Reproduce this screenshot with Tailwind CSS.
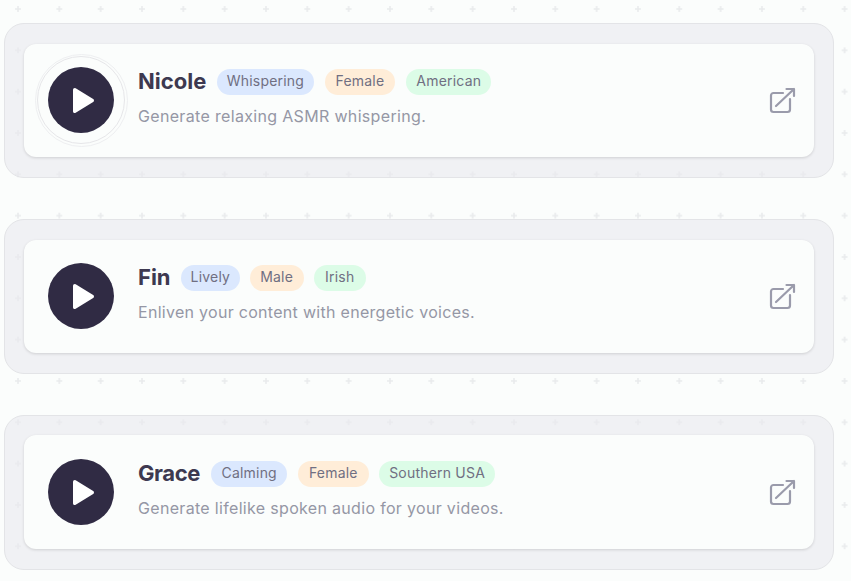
<!DOCTYPE html>
<html lang="en">
<head>
<meta charset="utf-8">
<script src="https://cdn.jsdelivr.net/npm/@tailwindcss/browser@4"></script>
</head>
<body class="relative h-[581px] w-[851px] overflow-hidden bg-[#fbfdfc] font-['Inter',sans-serif]">
<svg class="absolute inset-0" width="851" height="581" aria-hidden="true">
  <defs>
    <pattern id="p" x="-2.67" y="-11.67" width="41.33" height="41.33" patternUnits="userSpaceOnUse">
      <path d="M17.67 20.67h6M20.67 17.67v6" stroke="#e9ebed" stroke-width="1.6" fill="none"/>
    </pattern>
  </defs>
  <rect width="851" height="581" fill="url(#p)"/>
</svg>
<main class="relative flex flex-col gap-[41px] pt-[23px] pl-[4px]">

  <section class="h-[155px] w-[830px] rounded-[20px] border border-[#e3e4e7] bg-[#e9eaee]/60 pt-[20px] pl-[19px]">
    <div class="flex h-[113px] w-[790px] items-center rounded-[12px] bg-[#fbfdfc] pl-[24px] pr-[18px] shadow-[0_1px_3px_rgba(0,0,0,0.14)]">
      <div class="relative mb-px flex h-[66px] w-[66px] shrink-0 items-center justify-center rounded-full bg-[#302b44]">
        <span class="absolute -inset-[11px] rounded-full border border-[#e6e6e9]"></span>
        <span class="absolute -inset-[13.500px] rounded-full border border-[#eeeff1]"></span>
        <svg width="28" height="28" viewBox="0 0 28 28"><path d="M7.750 3.750 25.250 14.500 7.750 25.250z" fill="#fff" stroke="#fff" stroke-width="3.500" stroke-linejoin="round"/></svg>
      </div>
      <div class="-mt-[5px] ml-[24px] min-w-0 flex-1">
        <div class="flex items-center">
          <h2 class="mb-[2px] text-[22px] leading-[26px] font-bold text-[#3d3950]">Nicole</h2>
          <span class="ml-[11px] rounded-full bg-[#dbe8fe] px-[9.500px] pb-[2px] text-[14px] leading-[24px] tracking-[0.2px] text-[#706f82]">Whispering</span>
          <span class="ml-[11px] rounded-full bg-[#ffedd8] px-[11px] pb-[2px] text-[14px] leading-[24px] tracking-[0.2px] text-[#706f82]">Female</span>
          <span class="ml-[11px] rounded-full bg-[#dcfce7] px-[10px] pb-[2px] text-[14px] leading-[24px] tracking-[0.2px] text-[#706f82]">American</span>
        </div>
        <p class="mt-[8px] text-[16px] leading-[24px] tracking-[0.33px] text-[#9597a5]">Generate relaxing ASMR whispering.</p>
      </div>
      <svg class="mt-px" width="28" height="28" viewBox="0 0 28 28" fill="none" stroke="#9a9bab" stroke-width="2.2" stroke-linecap="round" stroke-linejoin="round"><path d="M15 6H5.500A2.500 2.500 0 0 0 3 8.500V22.500A2.500 2.500 0 0 0 5.500 25H19.500A2.500 2.500 0 0 0 22 22.500V12"/><path d="M8 19 26 2M18.500 2H26V9"/></svg>
    </div>
  </section>

  <section class="h-[155px] w-[830px] rounded-[20px] border border-[#e3e4e7] bg-[#e9eaee]/60 pt-[20px] pl-[19px]">
    <div class="flex h-[113px] w-[790px] items-center rounded-[12px] bg-[#fbfdfc] pl-[24px] pr-[18px] shadow-[0_1px_3px_rgba(0,0,0,0.14)]">
      <div class="relative mb-px flex h-[66px] w-[66px] shrink-0 items-center justify-center rounded-full bg-[#302b44]">
        <svg width="28" height="28" viewBox="0 0 28 28"><path d="M7.750 3.750 25.250 14.500 7.750 25.250z" fill="#fff" stroke="#fff" stroke-width="3.500" stroke-linejoin="round"/></svg>
      </div>
      <div class="-mt-[5px] ml-[24px] min-w-0 flex-1">
        <div class="flex items-center">
          <h2 class="mb-[2px] text-[22px] leading-[26px] font-bold text-[#3d3950]">Fin</h2>
          <span class="ml-[10px] rounded-full bg-[#dbe8fe] px-[10px] pb-[2px] text-[14px] leading-[24px] tracking-[0.2px] text-[#706f82]">Lively</span>
          <span class="ml-[9.500px] rounded-full bg-[#ffedd8] px-[10.500px] pb-[2px] text-[14px] leading-[24px] tracking-[0.2px] text-[#706f82]">Male</span>
          <span class="ml-[10px] rounded-full bg-[#dcfce7] px-[11.500px] pb-[2px] text-[14px] leading-[24px] tracking-[0.2px] text-[#706f82]">Irish</span>
        </div>
        <p class="mt-[8px] text-[16px] leading-[24px] tracking-[0.29px] text-[#9597a5]">Enliven your content with energetic voices.</p>
      </div>
      <svg class="mt-px" width="28" height="28" viewBox="0 0 28 28" fill="none" stroke="#9a9bab" stroke-width="2.2" stroke-linecap="round" stroke-linejoin="round"><path d="M15 6H5.500A2.500 2.500 0 0 0 3 8.500V22.500A2.500 2.500 0 0 0 5.500 25H19.500A2.500 2.500 0 0 0 22 22.500V12"/><path d="M8 19 26 2M18.500 2H26V9"/></svg>
    </div>
  </section>

  <section class="h-[155px] w-[830px] rounded-[20px] border border-[#e3e4e7] bg-[#e9eaee]/60 pt-[19px] pl-[19px]">
    <div class="flex h-[114px] w-[790px] items-center rounded-[12px] bg-[#fbfdfc] pl-[24px] pr-[18px] shadow-[0_1px_3px_rgba(0,0,0,0.14)]">
      <div class="relative flex h-[66px] w-[66px] shrink-0 items-center justify-center rounded-full bg-[#302b44]">
        <svg width="28" height="28" viewBox="0 0 28 28"><path d="M7.750 3.750 25.250 14.500 7.750 25.250z" fill="#fff" stroke="#fff" stroke-width="3.500" stroke-linejoin="round"/></svg>
      </div>
      <div class="-mt-[4px] ml-[24px] min-w-0 flex-1">
        <div class="flex items-center">
          <h2 class="mb-[2px] text-[22px] leading-[26px] font-bold tracking-[-0.4px] text-[#3d3950]">Grace</h2>
          <span class="ml-[11px] rounded-full bg-[#dbe8fe] px-[10.500px] pb-[2px] text-[14px] leading-[24px] tracking-[0.2px] text-[#706f82]">Calming</span>
          <span class="ml-[10.500px] rounded-full bg-[#ffedd8] px-[11px] pb-[2px] text-[14px] leading-[24px] tracking-[0.2px] text-[#706f82]">Female</span>
          <span class="ml-[10.500px] rounded-full bg-[#dcfce7] px-[10px] pb-[2px] text-[14px] leading-[24px] tracking-[0.2px] text-[#706f82]">Southern USA</span>
        </div>
        <p class="mt-[8px] text-[16px] leading-[24px] tracking-[0.32px] text-[#9597a5]">Generate lifelike spoken audio for your videos.</p>
      </div>
      <svg class="mt-[2px]" width="28" height="28" viewBox="0 0 28 28" fill="none" stroke="#9a9bab" stroke-width="2.2" stroke-linecap="round" stroke-linejoin="round"><path d="M15 6H5.500A2.500 2.500 0 0 0 3 8.500V22.500A2.500 2.500 0 0 0 5.500 25H19.500A2.500 2.500 0 0 0 22 22.500V12"/><path d="M8 19 26 2M18.500 2H26V9"/></svg>
    </div>
  </section>

</main>
</body>
</html>
